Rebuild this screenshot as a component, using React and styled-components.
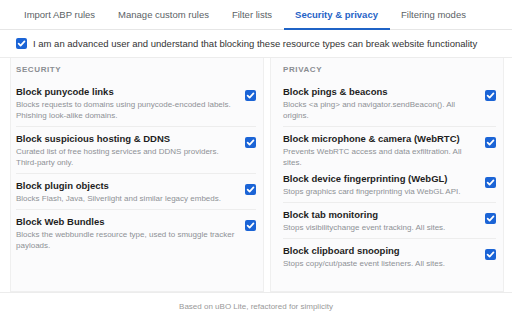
import React from "react";
import styled, { createGlobalStyle } from "styled-components";

const GlobalStyle = createGlobalStyle`
  html, body {
    margin: 0;
    padding: 0;
    background: #ffffff;
    font-family: "Liberation Sans", Arial, sans-serif;
  }
`

const tabs = ["Import ABP rules", "Manage custom rules", "Filter lists", "Security & privacy", "Filtering modes"]

const security = [
  { title: "Block punycode links", desc: "Blocks requests to domains using punycode-encoded labels. Phishing look-alike domains." },
  { title: "Block suspicious hosting & DDNS", desc: "Curated list of free hosting services and DDNS providers. Third-party only." },
  { title: "Block plugin objects", desc: "Blocks Flash, Java, Silverlight and similar legacy embeds." },
  { title: "Block Web Bundles", desc: "Blocks the webbundle resource type, used to smuggle tracker payloads.", last: true },
]

const privacy = [
  { title: "Block pings & beacons", desc: "Blocks <a ping> and navigator.sendBeacon(). All origins." },
  { title: "Block microphone & camera (WebRTC)", desc: "Prevents WebRTC access and data exfiltration. All sites.", flush: true },
  { title: "Block device fingerprinting (WebGL)", desc: "Stops graphics card fingerprinting via WebGL API." },
  { title: "Block tab monitoring", desc: "Stops visibilitychange event tracking. All sites." },
  { title: "Block clipboard snooping", desc: "Stops copy/cut/paste event listeners. All sites.", last: true },
]

const Check = () => (
  <Box>
    <svg width="9" height="9" viewBox="0 0 10 10">
      <path d="M1.8 5.2 L4 7.4 L8.3 2.6" fill="none" stroke="#fff" strokeWidth="1.9" strokeLinecap="round" strokeLinejoin="round" />
    </svg>
  </Box>
)

const Section = ({ label, items, inset }) => (
  <Panel $inset={inset}>
    <Label>{label}</Label>
    {items.map(i =>
      <Item key={i.title} $flush={i.flush} $last={i.last}>
        <ItemText>
          <ItemTitle>{i.title}</ItemTitle>
          <ItemDesc>{i.desc}</ItemDesc>
        </ItemText>
        <ItemCheck><Check /></ItemCheck>
      </Item>
    )}
  </Panel>
)

const App = () => {
  return (
    <Page>
      <GlobalStyle />
      <Tabs>
        {tabs.map(t => <Tab key={t} $active={t === "Security & privacy"}>{t}</Tab>)}
      </Tabs>
      <Advanced>
        <Check />
        <span>I am an advanced user and understand that blocking these resource types can break website functionality</span>
      </Advanced>
      <Columns>
        <Section label="SECURITY" items={security} inset={6} />
        <Section label="PRIVACY" items={privacy} inset={13} />
      </Columns>
      <Footer>Based on uBO Lite, refactored for simplicity</Footer>
    </Page>
  )
}

const Page = styled.div`
  width: 512px;
  height: 320px;
  display: flex;
  flex-direction: column;
  overflow: hidden;
`

const Tabs = styled.div`
  height: 29px;
  display: flex;
  padding-left: 13px;
  border-bottom: 1px solid #e6e6e6;
  flex-shrink: 0;
`

const Tab = styled.div`
  padding: 0 12px 0 11px;
  display: flex;
  align-items: center;
  font-size: 9.5px;
  color: ${p => p.$active ? "#1f63c6" : "#5b5f66"};
  font-weight: ${p => p.$active ? "bold" : "normal"};
  border-bottom: 2px solid ${p => p.$active ? "#1f63c6" : "transparent"};
  margin-bottom: -1px;
  padding-top: 1px;
`

const Advanced = styled.div`
  height: 27px;
  display: flex;
  align-items: center;
  gap: 6px;
  padding-left: 16px;
  font-size: 9.5px;
  color: #333;
  border-bottom: 1px solid #ececec;
  flex-shrink: 0;
`

const Box = styled.span`
  width: 11px;
  height: 11px;
  border-radius: 2px;
  background: #1b64d6;
  display: inline-flex;
  align-items: center;
  justify-content: center;
  flex-shrink: 0;
`

const Columns = styled.div`
  flex: 1;
  display: grid;
  grid-template-columns: 254px 1fr;
  gap: 6px;
  padding: 0 8px 0 10px;
  min-height: 0;
`

const Panel = styled.div`
  background: #fbfbfc;
  border: 1px solid #efefef;
  border-top: none;
  padding: 6px 7px 0 ${p => p.$inset - 1}px;
`

const Label = styled.div`
  font-size: 8px;
  font-weight: bold;
  letter-spacing: 0.6px;
  color: #8a8d92;
  line-height: 11px;
  margin-bottom: 5px;
`

const Item = styled.div`
  display: flex;
  align-items: flex-start;
  gap: 4px;
  padding: 5px 0 ${p => p.$flush ? "0" : "5px"};
  margin-bottom: ${p => p.$flush ? "-2px" : "0"};
  border-bottom: 1px solid ${p => p.$flush || p.$last ? "transparent" : "#ededed"};
`

const ItemText = styled.div`
  flex: 1;
  min-width: 0;
`

const ItemTitle = styled.div`
  font-size: 9.5px;
  font-weight: bold;
  line-height: 13px;
  color: #1e1e1e;
`

const ItemDesc = styled.div`
  font-size: 8px;
  line-height: 11px;
  color: #8e9196;
  margin-top: 1px;
`

const ItemCheck = styled.div`
  padding-top: 1px;
`

const Footer = styled.div`
  height: 27px;
  border-top: 1px solid #ececec;
  display: flex;
  align-items: center;
  justify-content: center;
  font-size: 8px;
  color: #999;
  flex-shrink: 0;
`

export default App;
